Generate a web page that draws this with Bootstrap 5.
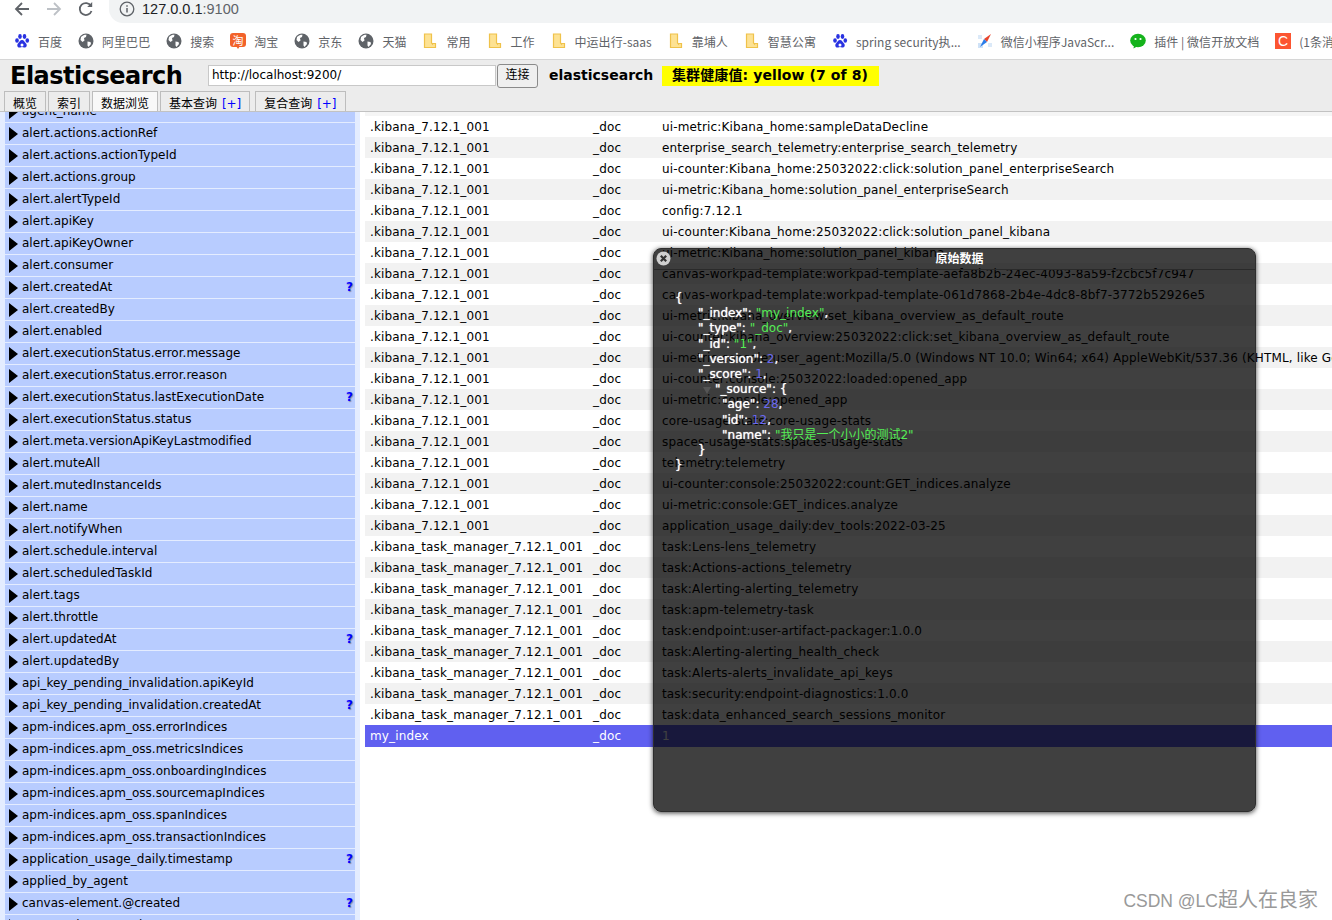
<!DOCTYPE html>
<html lang="zh">
<head>
  <meta charset="UTF-8">
  <meta name="viewport" content="width=device-width, initial-scale=1.0">
  <title>Elasticsearch Head</title>
  <link href="https://cdn.jsdelivr.net/npm/bootstrap@5.3.0/dist/css/bootstrap.min.css" rel="stylesheet">
  <style>
    html, body { height: 100%; }
    body { height: 920px; overflow: hidden; background: #fff; color: #000; font: 12px/1.2 "DejaVu Sans", "Noto Sans CJK SC", sans-serif; }

    /* browser chrome */
    .tool-bar { height: 23px; padding-left: 14px; }
    .tool-btn { width: 32px; height: 18px; margin-bottom: 5px; }
    .addr-pill { height: 23px; margin-left: -1px; padding: 0 0 5px 10px; gap: 7px; background: #f1f3f4; border-bottom-left-radius: 14px; color: #202124; font: 14.5px "Liberation Sans", sans-serif; }
    .addr-pill span { color: #5f6368; }
    .bm-bar { height: 37px; padding-left: 14px; border-bottom: 1px solid #d6d6d6; white-space: nowrap; gap: 16px; color: #5f6368; font: 12px "Noto Sans CJK SC", sans-serif; }
    .bm-item { gap: 8px; flex: none; }
    .bm-ico { width: 16px; height: 16px; flex: none; }
    .bm-wide { letter-spacing: .03px; }

    /* head app header */
    .es-head { height: 52px; background: #ececec; border-bottom: 1px solid #c2c2c2; overflow: hidden; flex: none; }
    .es-top { height: 31px; padding-left: 10px; flex: none; }
    .es-title { width: 198px; padding-top: 1px; font: bold 24px "DejaVu Sans", sans-serif; letter-spacing: -.5px; }
    .es-url { width: 288px; height: 21px; padding: 0 3px; border: 1px solid #c8c8c8; background: #fff; font: 12px/19px "DejaVu Sans", sans-serif; }
    .es-connect { width: 41px; height: 24px; margin-left: 1px; padding: 0; border: 1px solid #8a8a8a; border-radius: 3px; background: #efefef; color: #000; font-size: 12px; }
    .es-name { margin-left: 11px; width: 113px; font-weight: bold; font-size: 14px; }
    .es-health { width: 217px; height: 20px; padding-left: 10px; background: #ff0; font-weight: bold; font-size: 14px; line-height: 19px; letter-spacing: .1px; }
    .es-tabs { padding-left: 4px; gap: 2px; flex: none; }
    .es-tab { height: 26px; padding: 5px 8px 0; border: 1px solid #bdbdbd; background: #ececec; white-space: nowrap; }
    .es-tab.on { background: #f8f8f8; }
    .es-tab.last { margin-left: 3px; }
    .es-tab b { margin-left: 1px; color: #00f; font-weight: normal; }

    /* filter column + results */
    .es-main { height: 809px; overflow: hidden; }
    .es-side { width: 360px; flex: none; padding-left: 5px; padding-right: 5px; background: #e4ecff; overflow: hidden; }
    .es-fields { margin-top: -11px; letter-spacing: .02px; }
    .es-field { height: 22px; padding-left: 4px; gap: 4px; background: #b8ccff; border-bottom: 1px solid #e4ecff; white-space: nowrap; }
    .es-arrow { width: 0; height: 0; border-style: solid; border-width: 7px 0 7px 9px; border-color: transparent transparent transparent #000; flex: none; }
    .es-q { margin-left: auto; margin-right: 2px; color: #00f; font-weight: bold; text-shadow: 1px 1px 1px #88a; }
    .es-results { margin-left: 5px; flex-grow: 1; overflow: hidden; background: #fff; border-top: 4px solid #f5f5f5; letter-spacing: .15px; }
    .es-row { height: 21px; padding-top: 1px; white-space: nowrap; align-items: center; }
    .es-row:nth-child(even) { background: #f2f2f2; }
    .es-row.sel { height: 22px; background: #6060f0; color: #fff; }
    .c-index { width: 228px; padding-left: 5px; flex: none; }
    .c-type { width: 69px; flex: none; }

    /* raw data dialog */
    .raw-dlg { position: absolute; left: 653px; top: 248px; width: 603px; height: 564px; background: rgba(0,0,0,.75); border: 1px solid #2e2e2e; border-radius: 8px; box-shadow: 0 1px 5px rgba(0,0,0,.75); color: #fff; }
    .raw-title { height: 21px; padding-left: 10px; font-weight: bold; font-size: 12px; line-height: 21px; text-align: center; border-bottom: 1px solid #2a2a2a; }
    .raw-close { position: absolute; left: 2px; top: 2px; width: 15px; height: 15px; }
    .raw-json { padding: 21px 0 0 21px; font-size: 12px; line-height: 15.2px; text-shadow: 0 0 1px #fff; white-space: pre; }
    .raw-json i { font-style: normal; display: block; position: relative; }
    .in1 { padding-left: 23px; }
    .in1b { padding-left: 40px; }
    .in2 { padding-left: 47px; }
    .raw-fold { position: absolute; left: 28px; top: 5px; width: 0; height: 0; border-style: solid; border-width: 7px 4px 0; border-color: #555 transparent transparent; }
    .j-str { color: #55ee55; text-shadow: none; }
    .j-num { color: #6a6af0; text-shadow: none; }

    .wm-mark { position: absolute; right: 14px; bottom: 7px; color: #999; font: 20px "Liberation Sans", "Noto Sans CJK SC", sans-serif; text-shadow: 0 0 2px #fff; }
    .wm-mark span { font-size: 17.5px; }
  </style>
</head>
<body>
  <svg width="0" height="0" class="position-absolute">
    <symbol id="i-paw" viewBox="0 0 16 16"><g fill="#2932e1"><ellipse cx="3" cy="7.500" rx="1.800" ry="2.300"/><ellipse cx="6" cy="3.500" rx="1.800" ry="2.400"/><ellipse cx="10.500" cy="3.500" rx="1.800" ry="2.400"/><ellipse cx="13.300" cy="7.500" rx="1.800" ry="2.300"/><path d="M8 7c-2 0-2.500 2-4 3.500-1.500 1.600-.5 4.500 2 4 1-.2 1.500-.4 2-.4s1.200.2 2.200.4c2.500.4 3.300-2.500 1.800-4C10.500 9 10 7 8 7z"/></g><circle cx="8" cy="12" r="1.500" fill="#fff"/></symbol>
    <symbol id="i-globe" viewBox="0 0 16 16"><circle cx="8" cy="8" r="7.500" fill="#5f6368"/><path d="M3 4c2-2 4-2.500 5.500-2.300L8 4 6 5 6.500 7.500 4.500 9 2.500 7zM9.500 8.500l3 .5.500 2-2.500 3-1-1.500z" fill="#fff"/></symbol>
    <symbol id="i-folder" viewBox="0 0 16 16"><path d="M2.500 1h7v9l1 1v-.5h3v4h-11z" fill="#fde293" stroke="#efc24a" stroke-width="1.200"/></symbol>
    <symbol id="i-comp" viewBox="0 0 16 16"><rect x="1" y="2" width="4" height="4" fill="#dbe9f8"/><rect x="1" y="10" width="5" height="5" fill="#cfe2f7"/><rect x="11" y="10" width="4" height="4" fill="#dbe9f8"/><path d="M14 1 7 6l3 3z" fill="#e8452c"/><path d="M3 14l4-8 3 3z" fill="#2b7de9"/></symbol>
    <symbol id="i-wx" viewBox="0 0 16 16"><ellipse cx="8" cy="7.500" rx="7.800" ry="6.800" fill="#15b31c"/><path d="M4 12l-.5 3.500L8 13z" fill="#15b31c"/><circle cx="5.500" cy="6" r="1.100" fill="#fff"/><circle cx="10.500" cy="6" r="1.100" fill="#fff"/></symbol>
  </svg>

  <div class="tool-bar d-flex align-items-center">
    <div class="tool-btn d-flex align-items-center"><svg width="16" height="16" viewBox="0 0 16 16" fill="none" stroke="#5f6368" stroke-width="1.800"><path d="M15 8H2M8 2 2 8l6 6"/></svg></div>
    <div class="tool-btn d-flex align-items-center"><svg width="16" height="16" viewBox="0 0 16 16" fill="none" stroke="#bdc1c6" stroke-width="1.800"><path d="M1 8h13M8 2l6 6-6 6"/></svg></div>
    <div class="tool-btn d-flex align-items-center"><svg width="16" height="16" viewBox="0 0 16 16" fill="none" stroke="#5f6368" stroke-width="1.800"><path d="M13.500 10a6 6 0 1 1-.5-5"/><path d="M14.200 1v5h-5" fill="#5f6368" stroke="none"/></svg></div>
    <div class="addr-pill flex-grow-1 d-flex align-items-center">
      <svg width="16" height="16" viewBox="0 0 16 16" fill="none" stroke="#5f6368" stroke-width="1.300"><circle cx="8" cy="8" r="6.800"/><path d="M8 7v4.500M8 4.200v1.600" stroke-width="1.500"/></svg>
      <div>127.0.0.1<span>:9100</span></div>
    </div>
  </div>

  <div class="bm-bar d-flex align-items-center overflow-hidden" id="bookmarks"></div>

  <div class="es-head d-flex flex-column">
    <div class="es-top d-flex align-items-center">
      <div class="es-title">Elasticsearch</div>
      <div class="es-url">http://localhost:9200/</div>
      <button class="es-connect" type="button">连接</button>
      <div class="es-name">elasticsearch</div>
      <div class="es-health">集群健康值: yellow (7 of 8)</div>
    </div>
    <div class="es-tabs d-flex">
      <div class="es-tab">概览</div>
      <div class="es-tab">索引</div>
      <div class="es-tab on">数据浏览</div>
      <div class="es-tab">基本查询 <b>[+]</b></div>
      <div class="es-tab last">复合查询 <b>[+]</b></div>
    </div>
  </div>

  <div class="es-main d-flex">
    <div class="es-side"><div class="es-fields" id="fields"></div></div>
    <div class="es-results"><div id="rows"></div></div>
  </div>

  <div class="raw-dlg">
    <div class="raw-title">原始数据</div>
    <svg class="raw-close" viewBox="0 0 15 15"><circle cx="7.500" cy="7.500" r="7" fill="#d0d0d0"/><path d="M4.800 4.800l5.400 5.400M10.200 4.800l-5.400 5.400" stroke="#333" stroke-width="2.200"/></svg>
    <div class="raw-json"><i>{</i><i class="in1">"_index": <span class="j-str">"my_index"</span>,</i><i class="in1">"_type": <span class="j-str">"_doc"</span>,</i><i class="in1">"_id": <span class="j-str">"1"</span>,</i><i class="in1">"_version": <span class="j-num">2</span>,</i><i class="in1">"_score": <span class="j-num">1</span>,</i><i class="in1b"><span class="raw-fold"></span>"_source": {</i><i class="in2">"age": <span class="j-num">28</span>,</i><i class="in2">"id": <span class="j-num">12</span>,</i><i class="in2">"name": <span class="j-str">"我只是一个小小的测试2"</span></i><i class="in1">}</i><i>}</i></div>
  </div>

  <div class="wm-mark"><span>CSDN @LC</span>超人在良家</div>

  <script>
    // bookmarks bar
    const bookmarks = [
      ['paw', '百度'], ['globe', '阿里巴巴'], ['globe', '搜索'], ['tao', '淘宝'], ['globe', '京东'], ['globe', '天猫'],
      ['folder', '常用'], ['folder', '工作'], ['folder', '中运出行-saas'], ['folder', '靠埔人'], ['folder', '智慧公寓'],
      ['paw', 'spring security执...'], ['comp', '微信小程序JavaScr...'], ['wx', '插件 | 微信开放文档'], ['csdn', '(1条消息) CSDN']
    ];
    function bmIcon(kind) {
      if (kind === 'tao') {
        return '<svg class="bm-ico" viewBox="0 0 16 16"><rect width="16" height="14" rx="3" fill="#f2622a"/><path d="M6 13h4l-2 3z" fill="#f2622a"/><text x="8" y="11.500" text-anchor="middle" font-size="11" fill="#fff">淘</text></svg>';
      }
      if (kind === 'csdn') {
        return '<svg class="bm-ico" viewBox="0 0 16 16"><rect width="16" height="16" fill="#fc5531"/><text x="8" y="13" text-anchor="middle" font-size="14" font-family="Liberation Sans" fill="#fff">C</text></svg>';
      }
      return `<svg class="bm-ico"><use href="#i-${kind}"/></svg>`;
    }
    document.getElementById('bookmarks').innerHTML = bookmarks
      .map(([k, t]) => `<div class="bm-item d-flex align-items-center">${bmIcon(k)}<span class="bm-wide">${t}</span></div>`).join('');

    // filter column, a trailing ? marks a date field
    const fields = [
      'agent_name', 'alert.actions.actionRef', 'alert.actions.actionTypeId', 'alert.actions.group', 'alert.alertTypeId',
      'alert.apiKey', 'alert.apiKeyOwner', 'alert.consumer', 'alert.createdAt?', 'alert.createdBy', 'alert.enabled',
      'alert.executionStatus.error.message', 'alert.executionStatus.error.reason', 'alert.executionStatus.lastExecutionDate?',
      'alert.executionStatus.status', 'alert.meta.versionApiKeyLastmodified', 'alert.muteAll', 'alert.mutedInstanceIds',
      'alert.name', 'alert.notifyWhen', 'alert.schedule.interval', 'alert.scheduledTaskId', 'alert.tags', 'alert.throttle',
      'alert.updatedAt?', 'alert.updatedBy', 'api_key_pending_invalidation.apiKeyId', 'api_key_pending_invalidation.createdAt?',
      'apm-indices.apm_oss.errorIndices', 'apm-indices.apm_oss.metricsIndices', 'apm-indices.apm_oss.onboardingIndices',
      'apm-indices.apm_oss.sourcemapIndices', 'apm-indices.apm_oss.spanIndices', 'apm-indices.apm_oss.transactionIndices',
      'application_usage_daily.timestamp?', 'applied_by_agent', 'canvas-element.@created?', 'canvas-element.@timestamp?'
    ];
    document.getElementById('fields').innerHTML = fields.map(f => {
      const date = f.endsWith('?');
      return `<div class="es-field d-flex align-items-center"><span class="es-arrow"></span><span>${date ? f.slice(0, -1) : f}</span>${date ? '<span class="es-q">?</span>' : ''}</div>`;
    }).join('');

    // result rows
    const kibana = [
      'ui-metric:Kibana_home:sampleDataDecline',
      'enterprise_search_telemetry:enterprise_search_telemetry',
      'ui-counter:Kibana_home:25032022:click:solution_panel_enterpriseSearch',
      'ui-metric:Kibana_home:solution_panel_enterpriseSearch',
      'config:7.12.1',
      'ui-counter:Kibana_home:25032022:click:solution_panel_kibana',
      'ui-metric:Kibana_home:solution_panel_kibana',
      'canvas-workpad-template:workpad-template-aefa8b2b-24ec-4093-8a59-f2cbc5f7c947',
      'canvas-workpad-template:workpad-template-061d7868-2b4e-4dc8-8bf7-3772b52926e5',
      'ui-metric:kibana_overview:set_kibana_overview_as_default_route',
      'ui-counter:kibana_overview:25032022:click:set_kibana_overview_as_default_route',
      'ui-metric:console:user_agent:Mozilla/5.0 (Windows NT 10.0; Win64; x64) AppleWebKit/537.36 (KHTML, like Gecko) Chrome/99.0',
      'ui-counter:console:25032022:loaded:opened_app',
      'ui-metric:console:opened_app',
      'core-usage-stats:core-usage-stats',
      'spaces-usage-stats:spaces-usage-stats',
      'telemetry:telemetry',
      'ui-counter:console:25032022:count:GET_indices.analyze',
      'ui-metric:console:GET_indices.analyze',
      'application_usage_daily:dev_tools:2022-03-25'
    ];
    const tasks = [
      'task:Lens-lens_telemetry', 'task:Actions-actions_telemetry', 'task:Alerting-alerting_telemetry', 'task:apm-telemetry-task',
      'task:endpoint:user-artifact-packager:1.0.0', 'task:Alerting-alerting_health_check', 'task:Alerts-alerts_invalidate_api_keys',
      'task:security:endpoint-diagnostics:1.0.0', 'task:data_enhanced_search_sessions_monitor'
    ];
    const row = (idx, id, cls = '') =>
      `<div class="es-row d-flex ${cls}"><div class="c-index">${idx}</div><div class="c-type">_doc</div><div>${id}</div></div>`;
    document.getElementById('rows').innerHTML =
      kibana.map(id => row('.kibana_7.12.1_001', id)).join('') +
      tasks.map(id => row('.kibana_task_manager_7.12.1_001', id)).join('') +
      row('my_index', '1', 'sel');
  </script>
  <script src="https://cdn.jsdelivr.net/npm/bootstrap@5.3.0/dist/js/bootstrap.bundle.min.js"></script>
</body>
</html>
